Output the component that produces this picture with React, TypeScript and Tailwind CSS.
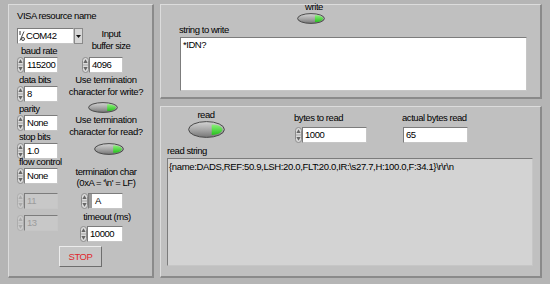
import React from "react";

// LabVIEW-style serial read/write front panel

const Label = ({ children, className = "" }: { children: React.ReactNode; className?: string }) => (
  <div className={`whitespace-pre text-black ${className}`}>{children}</div>
);

const Spinner = ({ dim = false }: { dim?: boolean }) => (
  <svg width="7" height="16" viewBox="0 0 7 16" className="shrink-0">
    <rect x="0.5" y="0.5" width="6" height="15" rx="3" fill={dim ? "#cacaca" : "#dadada"} stroke={dim ? "#adadad" : "#8c8c8c"} />
    <line x1="0.8" y1="8" x2="6.2" y2="8" stroke={dim ? "#b8b8b8" : "#9a9a9a"} strokeWidth="0.8" />
    <path d="M3.5 2.2 L5.6 6 L1.4 6 Z" fill={dim ? "#aaaaaa" : "#666666"} />
    <path d="M3.5 13.8 L5.6 10 L1.4 10 Z" fill={dim ? "#aaaaaa" : "#666666"} />
  </svg>
);

const Toggle = ({ w, h }: { w: number; h: number }) => (
  <svg width={w} height={h} viewBox={`0 0 ${w} ${h}`} className="shrink-0 overflow-visible">
    <defs>
      <linearGradient id="tgl" x1="0" y1="0" x2="0" y2="1">
        <stop offset="0" stopColor="#d4d4d4" />
        <stop offset="0.55" stopColor="#a4a4a4" />
        <stop offset="1" stopColor="#767676" />
      </linearGradient>
      <linearGradient id="led" x1="0" y1="0" x2="0" y2="1">
        <stop offset="0" stopColor="#8cf07a" />
        <stop offset="1" stopColor="#27c21d" />
      </linearGradient>
    </defs>
    <ellipse cx={w / 2} cy={h / 2} rx={w / 2 - 0.6} ry={h / 2 - 0.6} fill="url(#tgl)" stroke="#4a4a4a" strokeWidth="1" />
    <path
      d={`M${w * 0.64} ${h * 0.2} C${w * 0.84} ${h * 0.2} ${w * 0.93} ${h * 0.38} ${w * 0.93} ${h * 0.5} C${w * 0.93} ${h * 0.62} ${w * 0.84} ${h * 0.82} ${w * 0.64} ${h * 0.82} Z`}
      fill="url(#led)"
    />
  </svg>
);

const sunken = "border border-t-[#7c7c7c] border-l-[#7c7c7c] border-b-[#c6c6c6] border-r-[#c6c6c6]";

const NumBox = ({ value, w = 34, dim = false, radix = false, spin = true }: { value: string; w?: number; dim?: boolean; radix?: boolean; spin?: boolean }) => (
  <div className="flex items-center h-[16px]">
    {spin && <Spinner dim={dim} />}
    <div
      className={`h-[16px] flex items-center leading-[12px] ${sunken} ${dim ? "bg-[#c8c8c8] text-[#9c9c9c]" : "bg-white text-black"}`}
      style={{ width: w }}
    >
      {radix && <div className="w-[3px] h-[14px] bg-[#9a9a9a] mr-[1px]" />}
      <span className="pl-[2px]">{value}</span>
    </div>
  </div>
);

const Combo = () => (
  <div className="flex h-[16px] w-[66px]">
    <div className={`flex-1 flex items-center bg-white ${sunken} leading-[12px]`}>
      <svg width="6" height="12" viewBox="0 0 6 12" className="ml-[1px] shrink-0">
        <line x1="1" y1="1" x2="1" y2="5" stroke="#333" strokeWidth="1" />
        <line x1="5" y1="1.5" x2="1" y2="10.5" stroke="#333" strokeWidth="0.9" />
        <circle cx="4" cy="9" r="1.5" fill="none" stroke="#333" strokeWidth="0.9" />
      </svg>
      <span className="pl-[1px]">COM42</span>
    </div>
    <div className="w-[9px] h-[16px] bg-[#d6d6d6] border border-[#8a8a8a] flex items-center justify-center">
      <svg width="5" height="3" viewBox="0 0 5 3">
        <path d="M0 0 L5 0 L2.5 3 Z" fill="#111" />
      </svg>
    </div>
  </div>
);

const panel =
  "bg-[#c0c0c0] border-t border-l border-t-[#dcdcdc] border-l-[#dcdcdc] border-b-2 border-r-2 border-b-[#8a8a8a] border-r-[#8a8a8a]";

export default function App() {
  return (
    <div className="w-[550px] h-[284px] bg-[#b5b5b5] flex gap-[6px] pl-[8px] pt-[4px] font-['Liberation_Sans',Arial,sans-serif] text-[9.5px] tracking-[-0.45px] leading-[12px] overflow-hidden">
      {/* serial settings */}
      <div className={`w-[146px] h-[274px] flex flex-col pl-[8px] ${panel}`}>
        <Label className="mt-[5px] leading-[12px]">VISA resource name</Label>
        <div className="flex mt-[6px]">
          <div className="w-[65px] flex flex-col items-start">
            <Combo />
            <Label className="leading-[13px] pl-[4px]">baud rate</Label>
            <NumBox value="115200" />
            <Label className="leading-[13px] pl-[2px]">data bits</Label>
            <NumBox value="8" />
            <Label className="leading-[13px] pl-[2px]">parity</Label>
            <NumBox value="None" />
            <Label className="leading-[12px] pl-[2px]">stop bits</Label>
            <NumBox value="1.0" />
            <Label className="leading-[12px] pl-[2px] mt-[-3px]">flow control</Label>
            <NumBox value="None" />
            <div className="mt-[9px]">
              <NumBox value="11" dim />
            </div>
            <div className="mt-[6px]">
              <NumBox value="13" dim />
            </div>
          </div>
          <div className="w-[48px] flex flex-col items-center">
            <Label className="text-center leading-[12px] ml-[10px]">{"Input\nbuffer size"}</Label>
            <div className="self-start mt-[5px]">
              <NumBox value="4096" />
            </div>
            <Label className="text-center leading-[12px] mt-[1px] tracking-[-0.35px]">{"Use termination\ncharacter for write?"}</Label>
            <div className="self-start ml-[6px] mt-[4px] h-[11px]">
              <Toggle w={30} h={11} />
            </div>
            <Label className="text-center leading-[12px] mt-[1px] tracking-[-0.35px]">{"Use termination\ncharacter for read?"}</Label>
            <div className="self-start ml-[12px] mt-[5px] h-[12px]">
              <Toggle w={30} h={12} />
            </div>
            <Label className="text-center leading-[11px] mt-[11px]">{"termination char\n(0xA = '\\n' = LF)"}</Label>
            <div className="self-start ml-[-1px] mt-[5px]">
              <NumBox value="A" w={35} radix />
            </div>
            <Label className="leading-[12px] mt-[2px] ml-[2px]">timeout (ms)</Label>
            <div className="self-start ml-[-2px] mt-[3px]">
              <NumBox value="10000" w={36} />
            </div>
          </div>
        </div>
        <div className="self-start ml-[42px] mt-[4px] w-[43px] h-[21px] flex items-center justify-center bg-[#c6c6c6] border border-t-[#ececec] border-l-[#ececec] border-b-[#6e6e6e] border-r-[#6e6e6e] text-[#e0262c]">
          STOP
        </div>
      </div>

      <div className="w-[382px] flex flex-col gap-[7px]">
        {/* write */}
        <div className={`h-[95px] flex flex-col ${panel}`}>
          <div className="ml-[133px] w-[40px] mt-[-4px] flex flex-col items-center">
            <Label className="leading-[12px]">write</Label>
            <div className="self-start ml-[3px] h-[11px]">
              <Toggle w={28} h={11} />
            </div>
          </div>
          <Label className="ml-[18px] leading-[12px]">string to write</Label>
          <div className={`ml-[19px] mt-[1px] w-[347px] h-[54px] bg-white ${sunken} pl-[2px] pt-[1px]`}>*IDN?</div>
        </div>

        {/* read */}
        <div className={`h-[172px] flex flex-col ${panel}`}>
          <div className="flex items-start">
            <div className="ml-[25px] mt-[2px] w-[40px] flex flex-col items-center">
              <Label className="leading-[12px]">read</Label>
              <div className="h-[17px]">
                <Toggle w={37} h={17} />
              </div>
            </div>
            <div className="ml-[68px] mt-[5px] flex flex-col">
              <Label className="leading-[12px]">bytes to read</Label>
              <div className="mt-[3px] ml-[1px]">
                <NumBox value="1000" w={65} />
              </div>
            </div>
            <div className="ml-[35px] mt-[5px] flex flex-col">
              <Label className="leading-[12px]">actual bytes read</Label>
              <div className="mt-[3px] ml-[1px]">
                <NumBox value="65" w={65} spin={false} />
              </div>
            </div>
          </div>
          <Label className="ml-[6px] mt-[2px] leading-[12px]">read string</Label>
          <div className={`ml-[6px] mt-[1px] w-[366px] h-[108px] bg-[#d3d3d3] ${sunken} pl-[1px] pt-[2px] text-black tracking-[-0.35px]`}>
            {"{name:DADS,REF:50.9,LSH:20.0,FLT:20.0,IR:\\s27.7,H:100.0,F:34.1}\\r\\r\\n"}
          </div>
        </div>
      </div>
    </div>
  );
}
